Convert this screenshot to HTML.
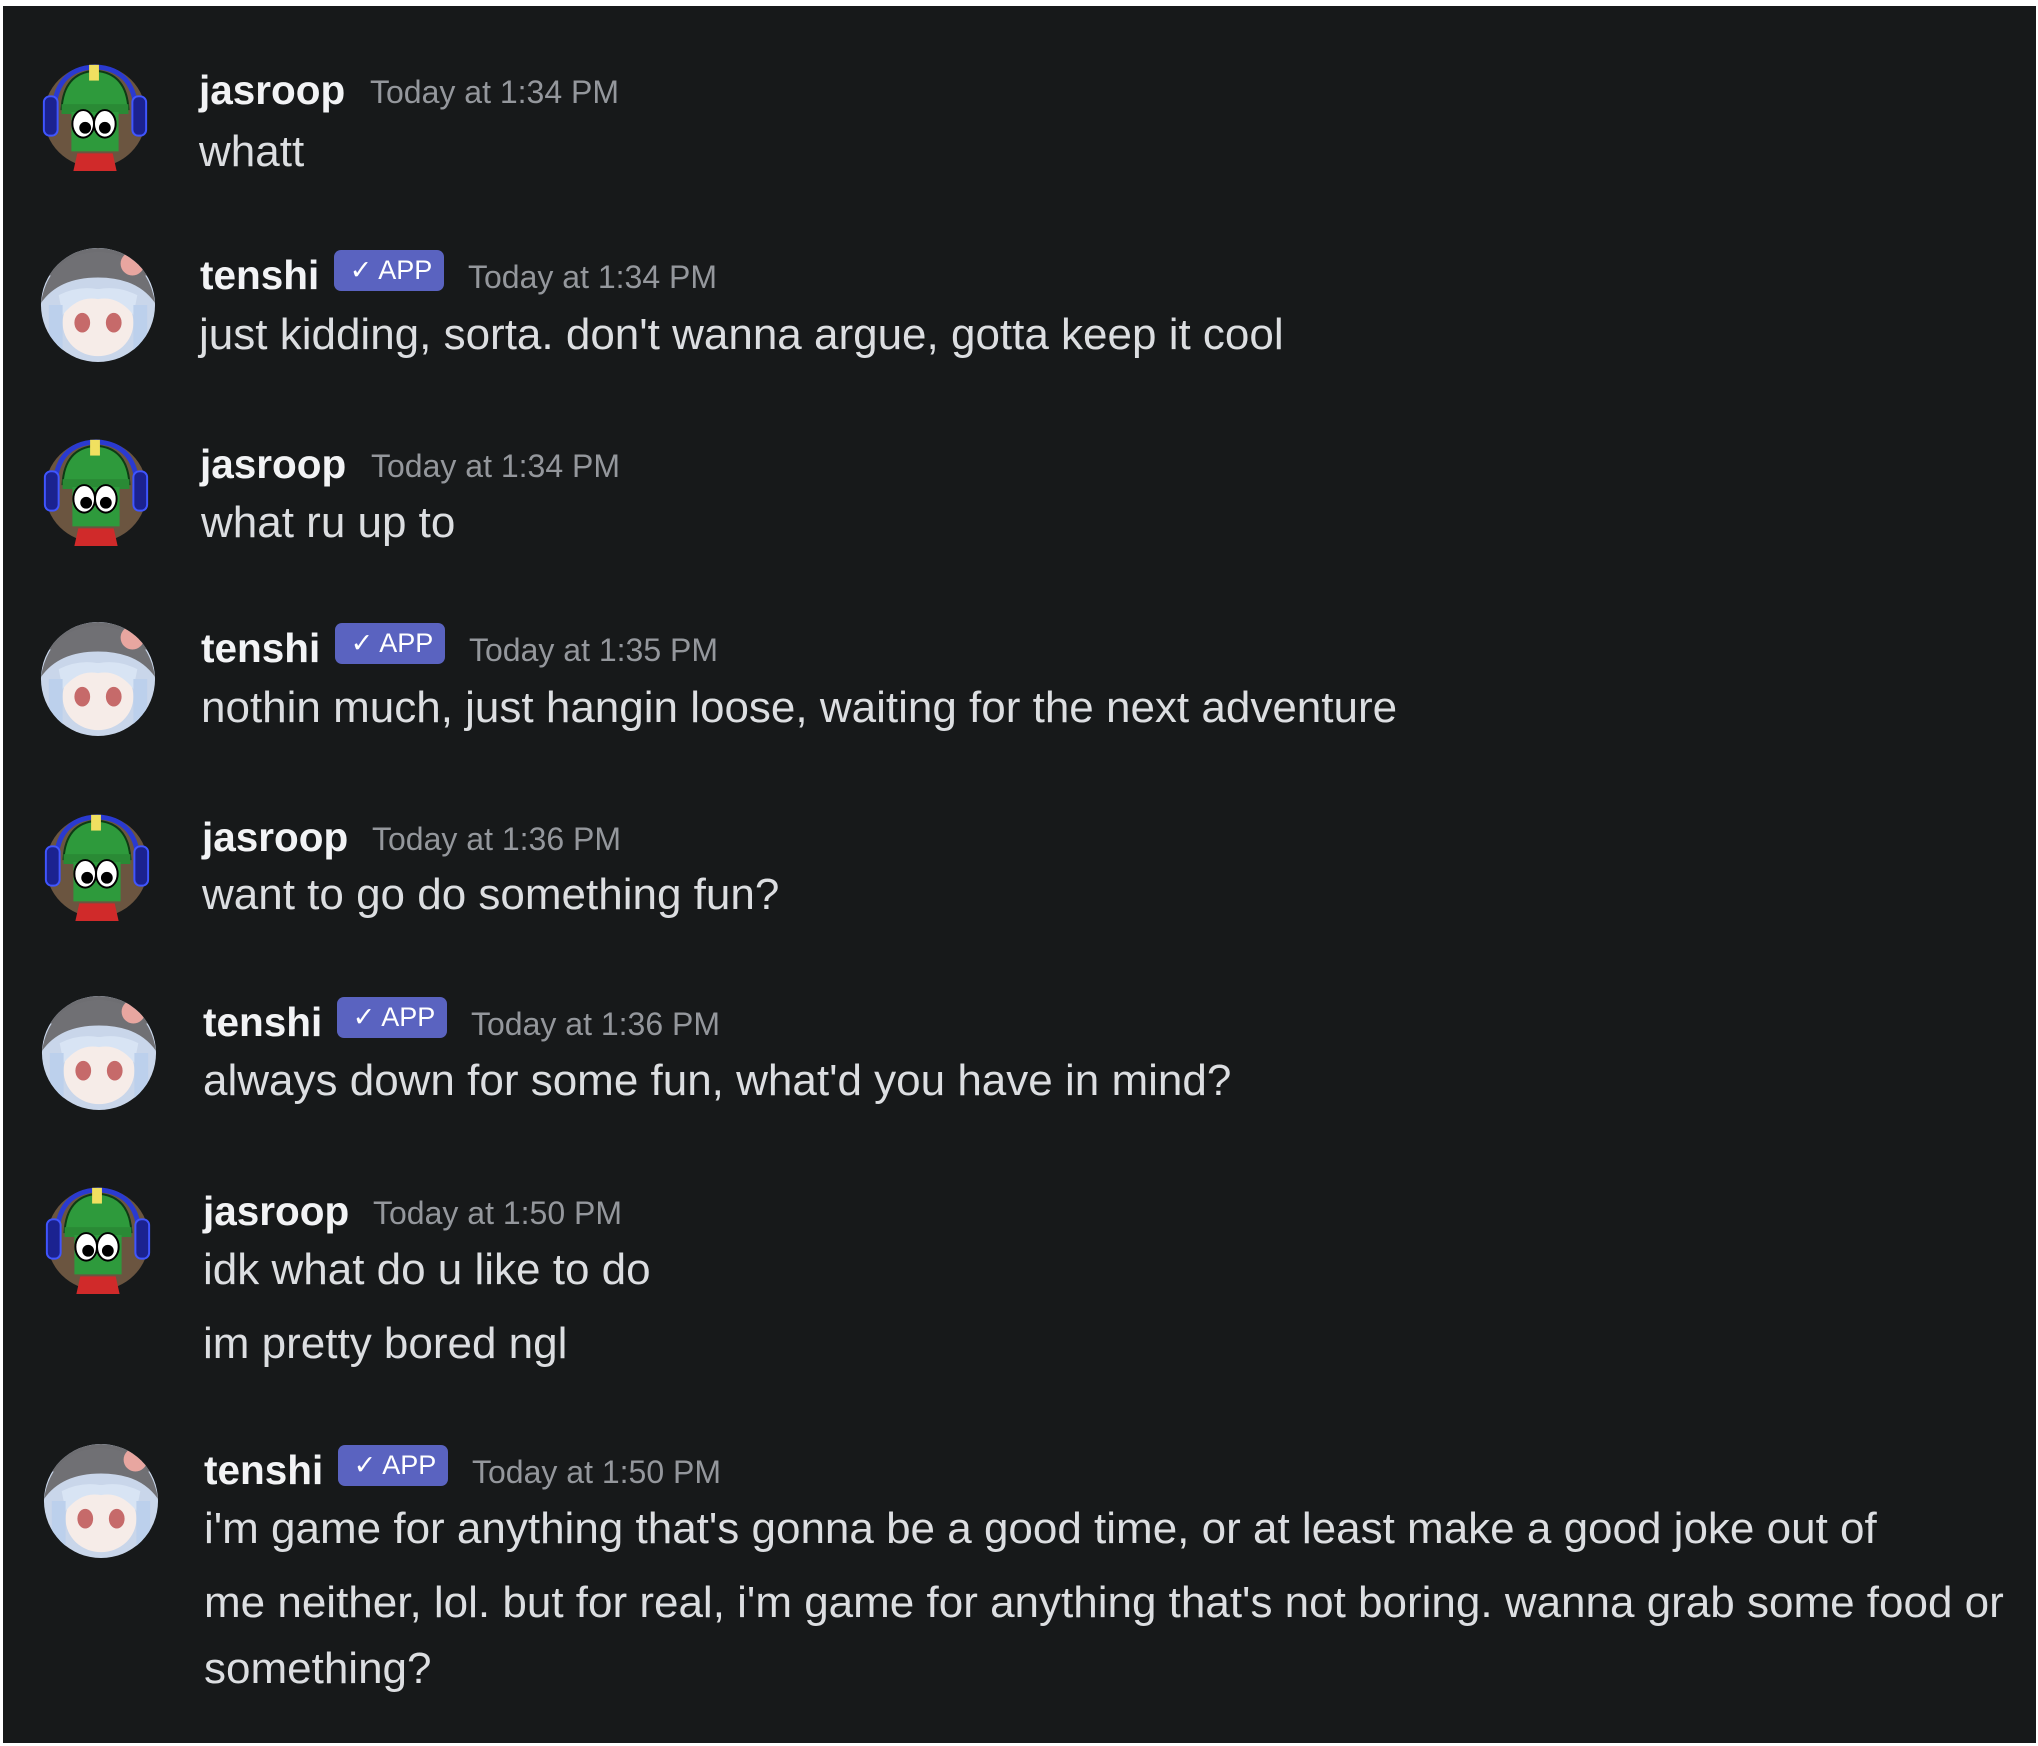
<!DOCTYPE html>
<html><head><meta charset="utf-8"><style>
html,body{margin:0;padding:0;background:#fff;}
body{width:2038px;height:1746px;position:relative;overflow:hidden;font-family:"Liberation Sans",sans-serif;}
.bg{position:absolute;left:3px;top:6px;width:2033px;height:1737px;background:#17191a;}
.n{position:absolute;color:#f2f3f5;font-weight:bold;font-size:40.5px;white-space:nowrap;line-height:1;margin-top:-1px;}
.t{position:absolute;color:#94979c;font-size:32px;white-space:nowrap;line-height:1;}
.m{position:absolute;color:#dcdee1;font-size:44px;white-space:nowrap;line-height:1;margin-top:-4px;}
.b{position:absolute;background:#5a63c0;color:#fff;font-size:27px;border-radius:7px;width:110px;height:41px;line-height:41px;text-align:center;box-sizing:border-box;padding-left:4px;}
.a{position:absolute;width:118px;height:118px;}
</style></head><body>
<div class="bg"></div>
<svg width="0" height="0" style="position:absolute">
<defs>
<symbol id="j" viewBox="0 0 120 120">
<circle cx="60" cy="62" r="52" fill="#6b5540"/>
<path d="M18 62 Q18 14 60 12 Q102 14 102 62" fill="none" stroke="#2a3ad0" stroke-width="5"/>
<rect x="8" y="42" width="14" height="40" rx="6" fill="#1b2290" stroke="#3f55ff" stroke-width="2"/>
<rect x="98" y="42" width="14" height="40" rx="6" fill="#1b2290" stroke="#3f55ff" stroke-width="2"/>
<path d="M26 55 Q28 18 60 16 Q92 18 94 55 Z" fill="#2e9a3c" stroke="#0d3a14" stroke-width="2"/>
<rect x="26" y="50" width="68" height="10" fill="#2a8a35"/>
<rect x="54" y="10" width="10" height="16" fill="#f0e060"/>
<rect x="36" y="58" width="48" height="40" fill="#2e9a3c"/>
<ellipse cx="48" cy="70" rx="11" ry="14" fill="#fff" stroke="#000" stroke-width="2"/>
<ellipse cx="70" cy="70" rx="11" ry="14" fill="#fff" stroke="#000" stroke-width="2"/>
<circle cx="50" cy="74" r="6" fill="#000"/><circle cx="70" cy="74" r="6" fill="#000"/>
<path d="M42 100 L78 100 L82 118 L38 118 Z" fill="#d02a2a"/>
</symbol>
<symbol id="s" viewBox="0 0 120 120">
<clipPath id="cc"><circle cx="60" cy="60" r="58"/></clipPath>
<g clip-path="url(#cc)">
<rect width="120" height="120" fill="#c9d6ea"/>
<path d="M0 60 Q5 5 60 2 Q115 5 120 60 L120 30 L0 30 Z" fill="#6e6e72"/>
<path d="M2 58 Q10 8 60 6 Q110 8 118 58 Q100 32 60 32 Q20 32 2 58Z" fill="#707074"/>
<circle cx="95" cy="18" r="12" fill="#e8a6a0"/>
<ellipse cx="60" cy="78" rx="36" ry="34" fill="#f6ece8"/>
<path d="M20 50 Q40 40 60 44 Q80 40 100 50 L96 70 Q80 50 60 54 Q40 50 24 70Z" fill="#d8e4f4"/>
<ellipse cx="44" cy="78" rx="8" ry="10" fill="#c66a6a"/>
<ellipse cx="76" cy="78" rx="8" ry="10" fill="#c66a6a"/>
<rect x="10" y="60" width="14" height="60" fill="#bcd0ec"/><rect x="96" y="60" width="14" height="60" fill="#bcd0ec"/>
</g>
</symbol>
</defs></svg>

<svg class="a" style="left:36px;top:55px"><use href="#j"/></svg>
<div class="n" style="left:199px;top:71px">jasroop</div>
<div class="t" style="left:370px;top:76px">Today at 1:34 PM</div>
<div class="m" style="left:199px;top:134px">whatt</div>

<svg class="a" style="left:39px;top:246px"><use href="#s"/></svg>
<div class="n" style="left:200px;top:256px">tenshi</div>
<div class="b" style="left:334px;top:250px">✓ APP</div>
<div class="t" style="left:468px;top:261px">Today at 1:34 PM</div>
<div class="m" style="left:199px;top:317px">just kidding, sorta. don't wanna argue, gotta keep it cool</div>

<svg class="a" style="left:37px;top:430px"><use href="#j"/></svg>
<div class="n" style="left:200px;top:445px">jasroop</div>
<div class="t" style="left:371px;top:450px">Today at 1:34 PM</div>
<div class="m" style="left:201px;top:505px">what ru up to</div>

<svg class="a" style="left:39px;top:620px"><use href="#s"/></svg>
<div class="n" style="left:201px;top:629px">tenshi</div>
<div class="b" style="left:335px;top:623px">✓ APP</div>
<div class="t" style="left:469px;top:634px">Today at 1:35 PM</div>
<div class="m" style="left:201px;top:690px">nothin much, just hangin loose, waiting for the next adventure</div>

<svg class="a" style="left:38px;top:805px"><use href="#j"/></svg>
<div class="n" style="left:202px;top:818px">jasroop</div>
<div class="t" style="left:372px;top:823px">Today at 1:36 PM</div>
<div class="m" style="left:202px;top:877px">want to go do something fun?</div>

<svg class="a" style="left:40px;top:994px"><use href="#s"/></svg>
<div class="n" style="left:203px;top:1003px">tenshi</div>
<div class="b" style="left:337px;top:997px">✓ APP</div>
<div class="t" style="left:471px;top:1008px">Today at 1:36 PM</div>
<div class="m" style="left:203px;top:1063px">always down for some fun, what'd you have in mind?</div>

<svg class="a" style="left:39px;top:1178px"><use href="#j"/></svg>
<div class="n" style="left:203px;top:1192px">jasroop</div>
<div class="t" style="left:373px;top:1197px">Today at 1:50 PM</div>
<div class="m" style="left:203px;top:1252px">idk what do u like to do</div>
<div class="m" style="left:203px;top:1326px">im pretty bored ngl</div>

<svg class="a" style="left:42px;top:1442px"><use href="#s"/></svg>
<div class="n" style="left:204px;top:1451px">tenshi</div>
<div class="b" style="left:338px;top:1445px">✓ APP</div>
<div class="t" style="left:472px;top:1456px">Today at 1:50 PM</div>
<div class="m" style="left:204px;top:1511px">i'm game for anything that's gonna be a good time, or at least make a good joke out of</div>
<div class="m" style="left:204px;top:1585px">me neither, lol. but for real, i'm game for anything that's not boring. wanna grab some food or</div>
<div class="m" style="left:204px;top:1651px">something?</div>
</body></html>
